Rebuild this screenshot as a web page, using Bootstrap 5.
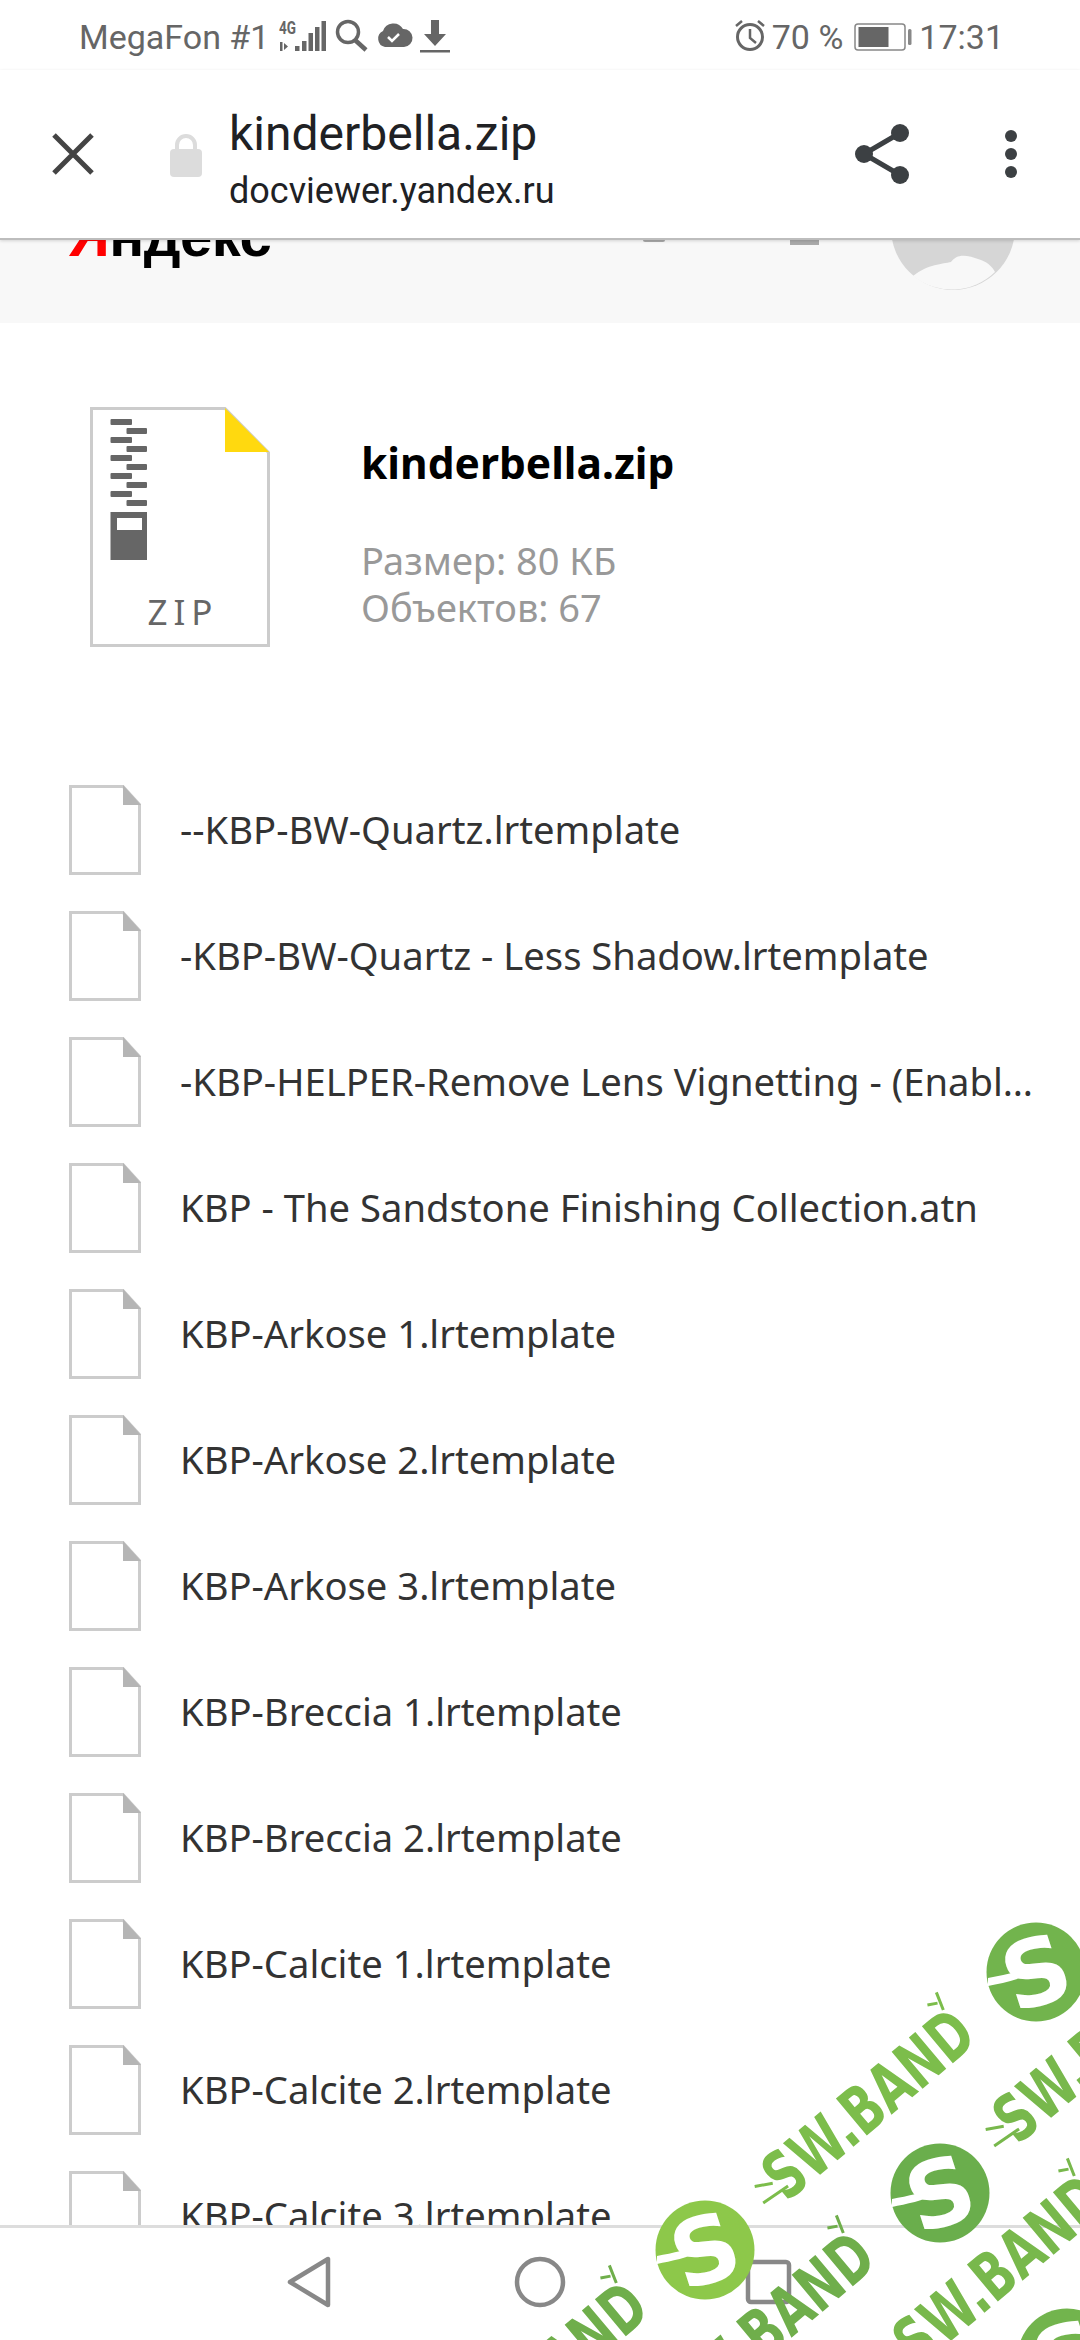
<!doctype html>
<html lang="ru">
<head>
<meta charset="utf-8">
<title>kinderbella.zip</title>
<link href="https://cdn.jsdelivr.net/npm/bootstrap@5.3.0/dist/css/bootstrap.min.css" rel="stylesheet">
<style>
html,body{margin:0;background:#fff}
.phone{width:1080px;height:2340px;position:relative;overflow:hidden;font-family:"Noto Sans","Open Sans",sans-serif;color:#333}
.stat{height:70px;padding:18px 76px 0 79px;font:34px/38px Roboto,sans-serif;color:#666}
.stat svg{display:block;flex:none}
.batt{margin-right:5px}
.tbar{height:170px;position:relative;z-index:2;border-bottom:2px solid #bdbdbd;box-shadow:0 1px 3px rgba(0,0,0,.15);background:#fff;padding:0 45px 0 51px}
.lockic{margin:2px 27px 0 75px}
.tbox{margin-top:12px}
.ttl{font:48px/54px Roboto,sans-serif;color:#202124}
.sub{font:36px/44px Roboto,sans-serif;color:#202124;margin-top:8px}
.ybar{height:83px;background:#f8f8f8;overflow:hidden;position:relative;padding-left:68px}
.ylogo{font:700 58px/68px "Liberation Sans",sans-serif;color:#000;margin-top:-38px;letter-spacing:-.5px}
.ylogo b{color:#f00}
.avt{position:absolute;left:891px;top:-74px;width:124px;height:124px}
.ybit1{position:absolute;left:790px;top:0;width:29px;height:5px;background:#aaa}
.ybit2{position:absolute;left:643px;top:0;width:22px;height:2px;background:#aaa;border-radius:0 0 11px 11px}
.scrl{flex:1 1 0;overflow:hidden}
.zipbox{padding:84px 0 0 90px;height:444px}
.ztxt{margin-left:91px}
.zname{font:700 42.500px/48px "Noto Sans",sans-serif;color:#000;margin-top:32px}
.zmeta{font:38px/47px "Noto Sans",sans-serif;color:#999;margin-top:50px}
.frow{height:126px;padding-left:69px;gap:39px}
.fnm{font:38.200px/50px "Noto Sans",sans-serif;color:#333;width:862px;padding-bottom:3px}
.bnav{height:115px;border-top:3px solid #ddd;background:#fff;position:relative}
.bnav svg{position:absolute;left:0;top:0}
.wmk{position:absolute;left:0;top:0;pointer-events:none;z-index:5}
</style>
</head>
<body>
<div class="phone d-flex flex-column">
  <svg width="0" height="0" class="position-absolute">
    <symbol id="fdoc" viewBox="0 0 72 90"><path d="M1.500 1.500H54l16.500 18v69h-69z" fill="#fff" stroke="#ccc" stroke-width="3"/><path d="M54 0l18 20H54z" fill="#b5b5b5"/></symbol>
  </svg>
  <div class="stat d-flex align-items-start justify-content-between">
    <div class="d-flex align-items-start">
      <span>MegaFon #1</span>
      <svg width="190" height="36" viewBox="265 18 190 36" fill="#666">
        <text x="275" y="33.500" font-family="Roboto" font-weight="700" font-size="18" textLength="17" lengthAdjust="spacingAndGlyphs">4G</text>
        <path d="M277 42v9h2.500v-9zM281 43l4 3.500-4 3.500zM292 46h4.500v5H292zM299 41h4.500v10H299zM305.500 33h4.500v18h-4.500zM312 27h4.500v24H312zM318.500 21h4.500v30h-4.500z" transform="translate(-1 0)"/>
        <g transform="translate(-4 0)">
          <circle cx="348" cy="32" r="10.500" fill="none" stroke="#666" stroke-width="3.500"/>
          <path d="M355 40l11 10" stroke="#666" stroke-width="4.500" fill="none"/>
          <path d="M385 47a8.500 8.500 0 0 1-2-16 11 11 0 0 1 20-2 9 9 0 0 1 1 18z"/>
          <path d="M388 37l4 4 7-7" fill="none" stroke="#fff" stroke-width="2.500"/>
          <path d="M431 20h8v14h7l-11 12-11-12h7zM420 50h30v2.500h-30z"/>
        </g>
      </svg>
    </div>
    <div class="d-flex align-items-start">
      <svg width="34" height="36" viewBox="735 18 34 36" fill="none" stroke="#666" class="me-1">
        <circle cx="751" cy="37" r="12.500" stroke-width="3"/>
        <path d="M751 29v9l6 5M737 26l6-5M765 26l-6-5" stroke-width="2.500"/>
      </svg>
      <span>70 %</span>
      <svg width="71" height="34" viewBox="841 18 71 34" class="batt">
        <rect x="853" y="24" width="50" height="26" rx="3" fill="none" stroke="#888" stroke-width="1.500"/>
        <rect x="856.500" y="27" width="30" height="20" fill="#666"/>
        <rect x="906" y="29" width="3.500" height="16" rx="1.500" fill="#888"/>
      </svg>
      <span>17:31</span>
    </div>
  </div>
  <div class="tbar d-flex align-items-center">
    <svg width="44" height="44" viewBox="0 0 44 44" fill="none" stroke="#444" stroke-width="5" class="flex-shrink-0"><path d="M3 3l38 38M41 3L3 41"/></svg>
    <svg width="32" height="44" viewBox="0 0 32 44" class="lockic flex-shrink-0"><path d="M7 18v-6a9 9 0 0 1 18 0v6" fill="none" stroke="#dcdcdc" stroke-width="4"/><rect y="16" width="32" height="28" rx="4" fill="#dcdcdc"/></svg>
    <div class="tbox flex-grow-1">
      <div class="ttl">kinderbella.zip</div>
      <div class="sub">docviewer.yandex.ru</div>
    </div>
    <svg width="180" height="60" viewBox="855 126 180 60" fill="#3c4043" class="flex-shrink-0">
      <path d="M900 135l-36 21 36 21" fill="none" stroke="#3c4043" stroke-width="5"/>
      <circle cx="900" cy="135" r="9"/><circle cx="864" cy="156" r="9"/><circle cx="900" cy="177" r="9"/>
      <circle cx="1011" cy="138" r="6"/><circle cx="1011" cy="156" r="6"/><circle cx="1011" cy="174" r="6"/>
    </svg>
  </div>
  <div class="scrl">
    <div class="ybar">
      <div class="ylogo"><b>Я</b>ндекс</div>
      <div class="ybit1"></div><div class="ybit2"></div>
      <svg class="avt" viewBox="0 0 124 124"><circle cx="62" cy="62" r="62" fill="#d6d6d6"/><path d="M22 110c15-12 30-12 38-14 6-8 14-8 30-2 8 3 12 8 14 12a62 62 0 0 1-82 4z" fill="#f8f8f8"/></svg>
    </div>
    <div class="zipbox d-flex">
      <svg width="180" height="240" viewBox="90 407 180 240" class="flex-shrink-0">
        <path d="M91.500 408.500H225l43.500 44v193h-177z" fill="#fff" stroke="#ccc" stroke-width="3"/>
        <path d="M225 408l44 44h-44z" fill="#ffd90f"/>
        <g fill="#666">
          <rect x="110.500" y="419" width="21.500" height="6" rx="1"/><rect x="126.500" y="428" width="20.500" height="6" rx="1"/>
          <rect x="110.500" y="437" width="21.500" height="6" rx="1"/><rect x="126.500" y="446" width="20.500" height="6" rx="1"/>
          <rect x="110.500" y="455" width="21.500" height="6" rx="1"/><rect x="126.500" y="464" width="20.500" height="6" rx="1"/>
          <rect x="110.500" y="473" width="21.500" height="6" rx="1"/><rect x="126.500" y="482" width="20.500" height="6" rx="1"/>
          <rect x="110.500" y="491" width="21.500" height="6" rx="1"/><rect x="126.500" y="500" width="20.500" height="6" rx="1"/>
          <path fill-rule="evenodd" d="M110.500 512H147v48h-36.500zM117 518v12h25v-12z"/>
        </g>
        <text x="183" y="625" text-anchor="middle" font-family="Noto Sans" font-size="35" letter-spacing="6" fill="#666">ZIP</text>
      </svg>
      <div class="ztxt">
        <div class="zname">kinderbella.zip</div>
        <div class="zmeta">Размер: 80 КБ<br>Объектов: 67</div>
      </div>
    </div>
    <div class="frow d-flex align-items-center"><svg width="72" height="90" class="flex-shrink-0"><use href="#fdoc"/></svg><div class="fnm text-truncate">--KBP-BW-Quartz.lrtemplate</div></div>
    <div class="frow d-flex align-items-center"><svg width="72" height="90" class="flex-shrink-0"><use href="#fdoc"/></svg><div class="fnm text-truncate">-KBP-BW-Quartz - Less Shadow.lrtemplate</div></div>
    <div class="frow d-flex align-items-center"><svg width="72" height="90" class="flex-shrink-0"><use href="#fdoc"/></svg><div class="fnm text-truncate">-KBP-HELPER-Remove Lens Vignetting - (Enable Profile Corrections).lrtemplate</div></div>
    <div class="frow d-flex align-items-center"><svg width="72" height="90" class="flex-shrink-0"><use href="#fdoc"/></svg><div class="fnm text-truncate">KBP - The Sandstone Finishing Collection.atn</div></div>
    <div class="frow d-flex align-items-center"><svg width="72" height="90" class="flex-shrink-0"><use href="#fdoc"/></svg><div class="fnm text-truncate">KBP-Arkose 1.lrtemplate</div></div>
    <div class="frow d-flex align-items-center"><svg width="72" height="90" class="flex-shrink-0"><use href="#fdoc"/></svg><div class="fnm text-truncate">KBP-Arkose 2.lrtemplate</div></div>
    <div class="frow d-flex align-items-center"><svg width="72" height="90" class="flex-shrink-0"><use href="#fdoc"/></svg><div class="fnm text-truncate">KBP-Arkose 3.lrtemplate</div></div>
    <div class="frow d-flex align-items-center"><svg width="72" height="90" class="flex-shrink-0"><use href="#fdoc"/></svg><div class="fnm text-truncate">KBP-Breccia 1.lrtemplate</div></div>
    <div class="frow d-flex align-items-center"><svg width="72" height="90" class="flex-shrink-0"><use href="#fdoc"/></svg><div class="fnm text-truncate">KBP-Breccia 2.lrtemplate</div></div>
    <div class="frow d-flex align-items-center"><svg width="72" height="90" class="flex-shrink-0"><use href="#fdoc"/></svg><div class="fnm text-truncate">KBP-Calcite 1.lrtemplate</div></div>
    <div class="frow d-flex align-items-center"><svg width="72" height="90" class="flex-shrink-0"><use href="#fdoc"/></svg><div class="fnm text-truncate">KBP-Calcite 2.lrtemplate</div></div>
    <div class="frow d-flex align-items-center"><svg width="72" height="90" class="flex-shrink-0"><use href="#fdoc"/></svg><div class="fnm text-truncate">KBP-Calcite 3.lrtemplate</div></div>
  </div>
  <div class="bnav">
    <svg width="1080" height="112" viewBox="0 2228 1080 112" fill="none" stroke="#888" stroke-width="4.500" stroke-linejoin="round">
      <path d="M328 2259v46l-38-23z"/>
      <circle cx="540" cy="2282" r="23"/>
      <rect x="748" y="2262" width="41" height="40" rx="3"/>
    </svg>
  </div>
  <svg class="wmk" width="1080" height="2340" viewBox="0 0 1080 2340">
    <defs>
      <g id="wtext" transform="rotate(-40)">
        <text x="0" y="22" text-anchor="middle" font-family="DejaVu Sans" font-weight="700" font-size="66" textLength="252" lengthAdjust="spacingAndGlyphs">SW.BAND</text>
        <path d="M-124 -2l-16 -9M-114 10l-30 -3M118 -25l6 -18M118 -34l-9 -5" fill="none" stroke="currentColor" stroke-width="3"/>
      </g>
      <g id="wcirc">
        <circle r="49.500"/>
        <g transform="rotate(-18)">
          <text y="33" text-anchor="middle" font-family="DejaVu Sans" font-weight="700" font-size="92" fill="#fff">S</text>
        </g>
        <path d="M-48 6c16-3 32-6 46-14l-2 8c-12 8-30 11-44 14z" fill="#fff"/>
      </g>
    </defs>
    <use href="#wtext" transform="translate(869 2105)" fill="#7cbd4b" color="#7cbd4b"/>
    <use href="#wtext" transform="translate(1100 2048)" fill="#78b84c" color="#78b84c"/>
    <use href="#wtext" transform="translate(769 2328)" fill="#6fae4b" color="#6fae4b"/>
    <use href="#wtext" transform="translate(1000 2271)" fill="#78b84c" color="#78b84c"/>
    <use href="#wtext" transform="translate(542 2378)" fill="#6fae4b" color="#6fae4b"/>
    <use href="#wcirc" transform="translate(1036 1972)" fill="#72b44d"/>
    <use href="#wcirc" transform="translate(940 2193)" fill="#6aae4c"/>
    <use href="#wcirc" transform="translate(705 2250)" fill="#8dc84a"/>
    <use href="#wcirc" transform="translate(1067 2358)" fill="#72b44d"/>
  </svg>
</div>
<script src="https://cdn.jsdelivr.net/npm/bootstrap@5.3.0/dist/js/bootstrap.bundle.min.js"></script>
</body>
</html>
